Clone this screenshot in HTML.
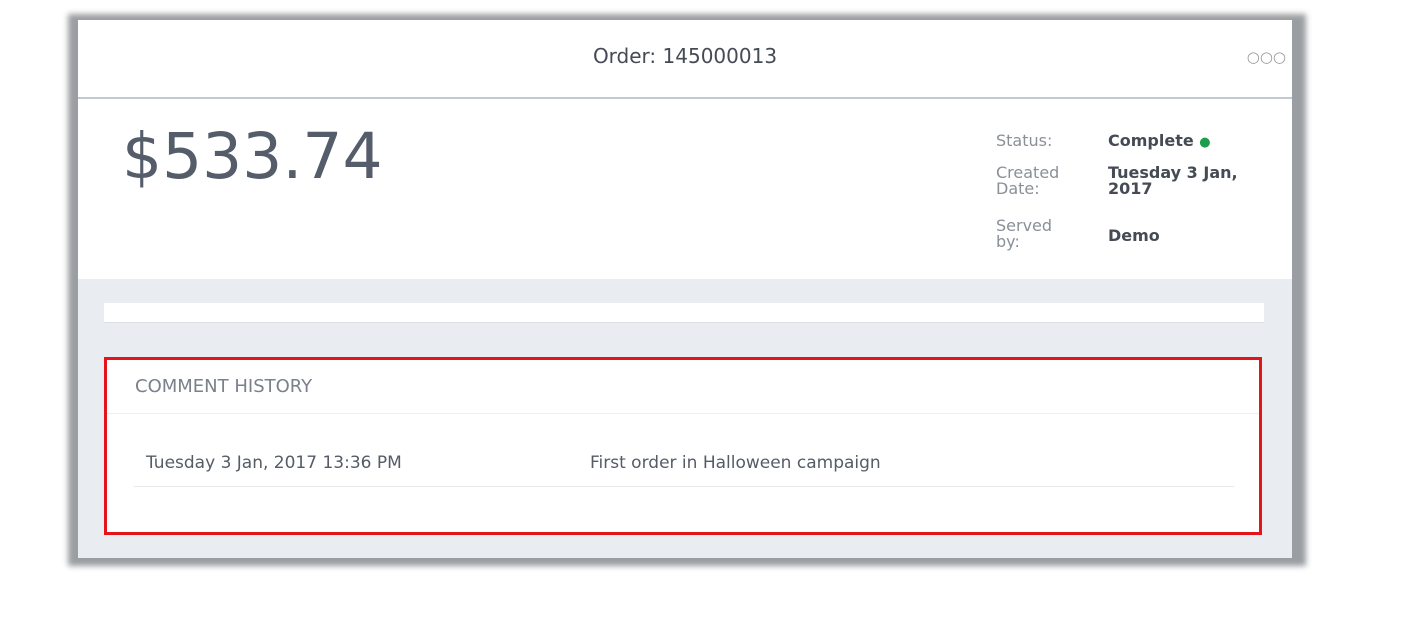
<!DOCTYPE html>
<html><head><style>
body{margin:0;width:1425px;height:629px;background:#fff;font-family:"DejaVu Sans",sans-serif;position:relative;overflow:hidden}
.sh{position:absolute;left:68px;top:14px;width:1238px;height:552px;background:#9a9da1;filter:blur(3px)}
.panel{position:absolute;left:78px;top:20px;width:1214px;height:538px;background:#e9ecf0}
.hdr{position:absolute;left:0;top:0;width:1214px;height:77px;background:#fff;border-bottom:2px solid #c3c9d1}
.hdr .t{position:absolute;left:0;width:100%;top:24px;text-align:center;font-size:20px;color:#444b55}
.dots{position:absolute;right:6px;top:28px;font-size:15px;color:#999;letter-spacing:0px}
.top{position:absolute;left:0;top:79px;width:1214px;height:180px;background:#fff}
.price{position:absolute;left:44px;top:21px;font-size:63px;color:#555d6a;font-weight:normal;letter-spacing:0px}
.lbl{position:absolute;left:918px;font-size:16px;color:#8a9098;line-height:16px}
.val{position:absolute;left:1030px;font-size:16px;color:#444b55;font-weight:bold;line-height:16px}
.bar{position:absolute;left:26px;top:283px;width:1160px;height:19px;background:#fff;border-bottom:1px solid #dde1e6}
.box{position:absolute;left:26px;top:337px;width:1152px;height:172px;background:#fff;border:3px solid #e4141b}
.box .h{position:absolute;left:28px;top:16px;font-size:18px;color:#7a818b}
.box .d{position:absolute;left:0;top:53px;width:100%;border-top:1px solid #edf0f3}
.row{position:absolute;left:39px;top:93px;font-size:17px;color:#555c66}
.row2{position:absolute;left:483px;top:93px;font-size:17px;color:#555c66}
.ul{position:absolute;left:27px;top:126px;width:1100px;border-top:1px solid #e8ebee}
</style></head><body>
<div class="sh"></div>
<div class="panel">
<div class="hdr"><div class="t">Order: 145000013</div><div class="dots">○○○</div></div>
<div class="top">
<div class="price">$533.74</div>
<div class="lbl" style="top:34px">Status:</div><div class="val" style="top:34px">Complete <span style="color:#1a9e4c;font-size:13px">●</span></div>
<div class="lbl" style="top:66px">Created<br>Date:</div><div class="val" style="top:66px">Tuesday 3 Jan,<br>2017</div>
<div class="lbl" style="top:119px">Served<br>by:</div><div class="val" style="top:129px">Demo</div>
</div>
<div class="bar"></div>
<div class="box"><div class="h">COMMENT HISTORY</div><div class="d"></div>
<div class="row">Tuesday 3 Jan, 2017 13:36 PM</div><div class="row2">First order in Halloween campaign</div><div class="ul"></div></div>
</div>
</body></html>
